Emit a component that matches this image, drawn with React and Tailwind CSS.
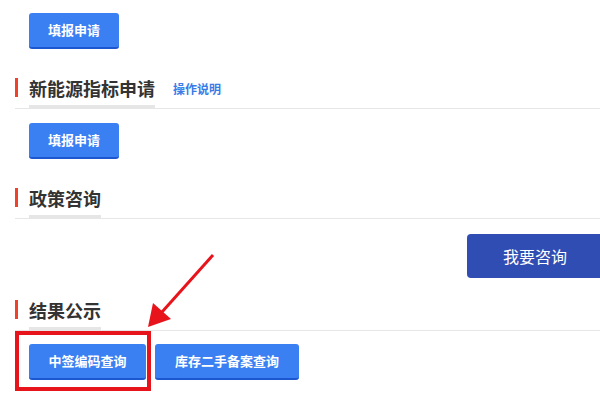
import React from "react";

const font = { fontFamily: '"Noto Sans CJK SC", "Noto Sans", sans-serif' };

function SectionTitle({ title, link }) {
  return (
    <div className="flex items-start border-b border-[#e6e6e6]">
      <div className="w-[3px] h-[19px] bg-[#f0412a]" />
      <div className="ml-[11px] pb-[7px] border-b-[3px] border-[#e6e6e6] text-[18px] leading-[20px] font-bold text-[#333]">
        {title}
      </div>
      {link && (
        <a className="ml-[18px] mt-[1px] text-[12px] leading-[20px] font-bold text-[#3a7be8]">
          {link}
        </a>
      )}
    </div>
  );
}

function BlueButton({ children, className = "" }) {
  return (
    <button
      className={
        "h-[36px] rounded-[3px] bg-[#3b80f2] border-b-2 border-[#1d57d0] text-[13px] font-bold text-white flex items-center justify-center " +
        className
      }
    >
      {children}
    </button>
  );
}

export default function App() {
  return (
    <div
      className="relative w-[600px] h-[400px] overflow-hidden bg-white pl-[15px] pt-[13px]"
      style={font}
    >
      <BlueButton className="ml-[14px] w-[90px]">填报申请</BlueButton>

      <div className="mt-[29px]">
        <SectionTitle title="新能源指标申请" link="操作说明" />
      </div>
      <BlueButton className="ml-[14px] mt-[14px] w-[90px]">填报申请</BlueButton>

      <div className="mt-[29px]">
        <SectionTitle title="政策咨询" />
      </div>
      <div className="flex justify-end mt-[15px] mr-[-3px]">
        <button className="w-[136px] h-[44px] rounded-[4px] bg-[#2f4db2] text-white text-[16px]">
          我要咨询
        </button>
      </div>

      <div className="mt-[22px]">
        <SectionTitle title="结果公示" />
      </div>
      <div className="flex gap-[9px] ml-[14px] mt-[13px]">
        <BlueButton className="w-[117px]">中签编码查询</BlueButton>
        <BlueButton className="w-[144px]">库存二手备案查询</BlueButton>
      </div>

      {/* annotation overlay */}
      <div className="absolute left-[15px] top-[331px] w-[136px] h-[60px] border-4 border-[#e8141b]" />
      <svg className="absolute left-0 top-0" width="600" height="400">
        <line x1="213" y1="255" x2="162" y2="312" stroke="#e8141b" strokeWidth="3" />
        <polygon points="148,327 153,303 171,319" fill="#e8141b" />
      </svg>
    </div>
  );
}
